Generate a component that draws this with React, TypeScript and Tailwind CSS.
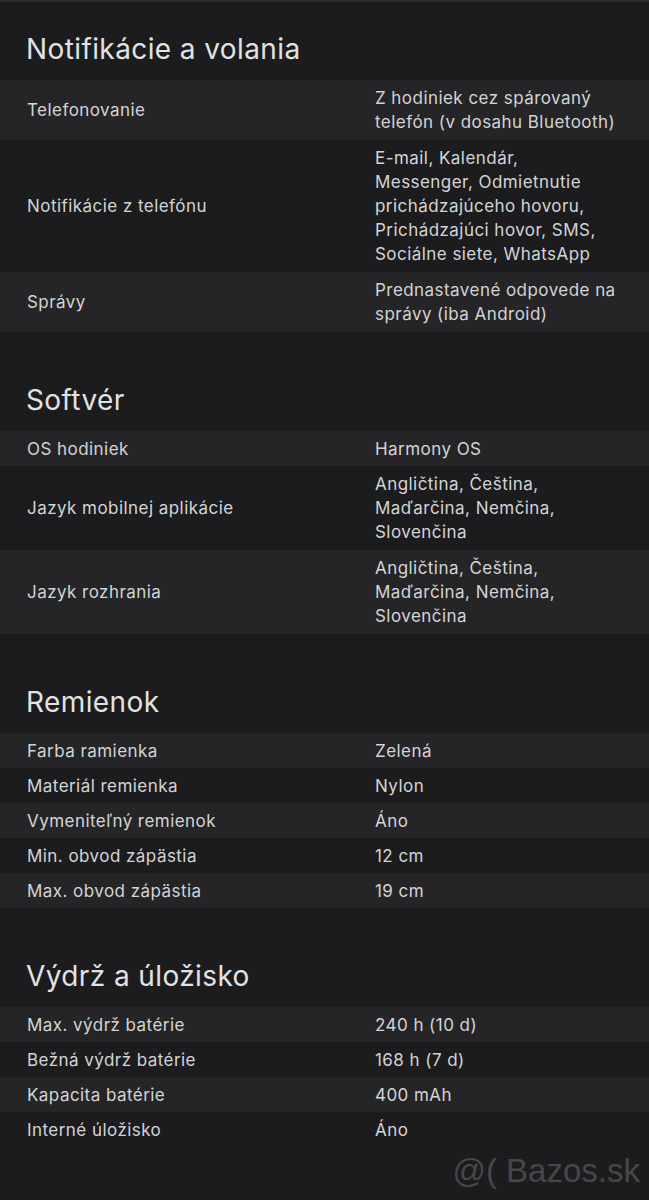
type Row = { label: string; value: string[] };
type Section = { title: string; rows: Row[] };

const sections: Section[] = [
  {
    title: 'Notifikácie a volania',
    rows: [
      { label: 'Telefonovanie', value: ['Z hodiniek cez spárovaný', 'telefón (v dosahu Bluetooth)'] },
      {
        label: 'Notifikácie z telefónu',
        value: [
          'E-mail, Kalendár,',
          'Messenger, Odmietnutie',
          'prichádzajúceho hovoru,',
          'Prichádzajúci hovor, SMS,',
          'Sociálne siete, WhatsApp',
        ],
      },
      { label: 'Správy', value: ['Prednastavené odpovede na', 'správy (iba Android)'] },
    ],
  },
  {
    title: 'Softvér',
    rows: [
      { label: 'OS hodiniek', value: ['Harmony OS'] },
      { label: 'Jazyk mobilnej aplikácie', value: ['Angličtina, Čeština,', 'Maďarčina, Nemčina,', 'Slovenčina'] },
      { label: 'Jazyk rozhrania', value: ['Angličtina, Čeština,', 'Maďarčina, Nemčina,', 'Slovenčina'] },
    ],
  },
  {
    title: 'Remienok',
    rows: [
      { label: 'Farba ramienka', value: ['Zelená'] },
      { label: 'Materiál remienka', value: ['Nylon'] },
      { label: 'Vymeniteľný remienok', value: ['Áno'] },
      { label: 'Min. obvod zápästia', value: ['12 cm'] },
      { label: 'Max. obvod zápästia', value: ['19 cm'] },
    ],
  },
  {
    title: 'Výdrž a úložisko',
    rows: [
      { label: 'Max. výdrž batérie', value: ['240 h (10 d)'] },
      { label: 'Bežná výdrž batérie', value: ['168 h (7 d)'] },
      { label: 'Kapacita batérie', value: ['400 mAh'] },
      { label: 'Interné úložisko', value: ['Áno'] },
    ],
  },
];

function SpecRow({ row, striped }: { row: Row; striped: boolean }) {
  const single = row.value.length === 1;
  return (
    <div
      className={`flex items-center text-[17px] leading-[24px] tracking-[0.45px] text-[#d4d4d6] ${
        single ? 'h-[35px]' : 'py-[6px]'
      } ${striped ? 'bg-[#252527]' : 'bg-[#1c1c1e]'}`}
    >
      <div className="w-[375px] shrink-0 pl-[27px]">{row.label}</div>
      <div className="flex-1 pr-[16px]">
        {row.value.map((line, i) => (
          <div key={i}>{line}</div>
        ))}
      </div>
    </div>
  );
}

export default function App() {
  return (
    <div
      className="relative min-h-[1200px] w-full bg-[#1c1c1e] border-t-2 border-[#2a2a2c] pb-[53px]"
      style={{ fontFamily: 'Inter, "Noto Sans", sans-serif' }}
    >
      {sections.map((section, si) => (
        <section key={section.title} className={si === 0 ? 'pt-[30px]' : 'pt-[51px]'}>
          <h2 className="pl-[26px] text-[28px] leading-[34px] tracking-[0.4px] text-[#e2e2e4] mb-[14px]">
            {section.title}
          </h2>
          <div>
            {section.rows.map((row, i) => (
              <SpecRow key={row.label} row={row} striped={i % 2 === 0} />
            ))}
          </div>
        </section>
      ))}

      {/* watermark */}
      <div
        className="absolute right-[9px] bottom-[13px] text-[33px] leading-none text-[#47474a]"
        style={{ fontFamily: '"Liberation Sans", Arial, sans-serif' }}
      >
        @( Bazos.sk
      </div>
    </div>
  );
}
